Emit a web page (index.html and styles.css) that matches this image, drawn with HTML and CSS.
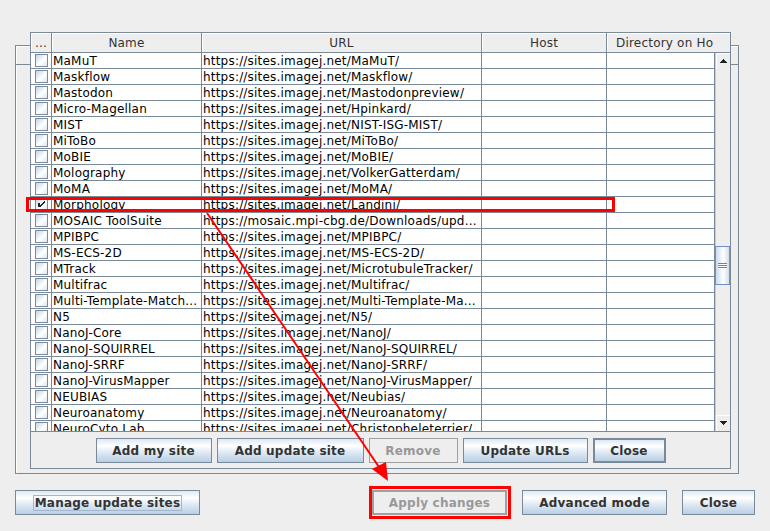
FILE: index.html
```html
<!DOCTYPE html>
<html>
<head>
<meta charset="utf-8">
<title>Manage update sites</title>
<link rel="stylesheet" href="styles.css">
</head>
<body>
<div class="screen">
  <div class="main">
    <div class="main-panel">
      <div class="main-header"></div>
    </div>
    <div class="main-buttons">
      <button class="btn btn-manage"><span class="focus">Manage update sites</span></button>
      <div class="spacer"></div>
      <button class="btn btn-apply" disabled>Apply changes</button>
      <button class="btn btn-adv">Advanced mode</button>
      <button class="btn btn-mclose">Close</button>
    </div>
  </div>

  <div class="dialog">
    <div class="thead">
      <div class="th">...</div>
      <div class="th">Name</div>
      <div class="th">URL</div>
      <div class="th">Host</div>
      <div class="th th-dir">Directory on Ho</div>
      <div class="th th-corner"></div>
    </div>
    <div class="tbody">
      <div class="rows">
        <div class="row"><div class="td"><span class="cb"></span></div><div class="td">MaMuT</div><div class="td">https://sites.imagej.net/MaMuT/</div><div class="td"></div><div class="td"></div></div>
        <div class="row"><div class="td"><span class="cb"></span></div><div class="td">Maskflow</div><div class="td">https://sites.imagej.net/Maskflow/</div><div class="td"></div><div class="td"></div></div>
        <div class="row"><div class="td"><span class="cb"></span></div><div class="td">Mastodon</div><div class="td">https://sites.imagej.net/Mastodonpreview/</div><div class="td"></div><div class="td"></div></div>
        <div class="row"><div class="td"><span class="cb"></span></div><div class="td">Micro-Magellan</div><div class="td">https://sites.imagej.net/Hpinkard/</div><div class="td"></div><div class="td"></div></div>
        <div class="row"><div class="td"><span class="cb"></span></div><div class="td">MIST</div><div class="td">https://sites.imagej.net/NIST-ISG-MIST/</div><div class="td"></div><div class="td"></div></div>
        <div class="row"><div class="td"><span class="cb"></span></div><div class="td">MiToBo</div><div class="td">https://sites.imagej.net/MiToBo/</div><div class="td"></div><div class="td"></div></div>
        <div class="row"><div class="td"><span class="cb"></span></div><div class="td">MoBIE</div><div class="td">https://sites.imagej.net/MoBIE/</div><div class="td"></div><div class="td"></div></div>
        <div class="row"><div class="td"><span class="cb"></span></div><div class="td">Molography</div><div class="td">https://sites.imagej.net/VolkerGatterdam/</div><div class="td"></div><div class="td"></div></div>
        <div class="row"><div class="td"><span class="cb"></span></div><div class="td">MoMA</div><div class="td">https://sites.imagej.net/MoMA/</div><div class="td"></div><div class="td"></div></div>
        <div class="row"><div class="td"><span class="cb"><svg class="check" width="13" height="13" viewBox="0 0 13 13" shape-rendering="crispEdges"><path d="M3 5h2v4h-2z M9 3h1v2h-1z M8 4h1v2h-1z M7 5h1v2h-1z M6 6h1v2h-1z M5 7h1v2h-1z" fill="#222"/></svg></span></div><div class="td">Morphology</div><div class="td">https://sites.imagej.net/Landini/</div><div class="td"></div><div class="td"></div></div>
        <div class="row"><div class="td"><span class="cb"></span></div><div class="td">MOSAIC ToolSuite</div><div class="td">https://mosaic.mpi-cbg.de/Downloads/upd...</div><div class="td"></div><div class="td"></div></div>
        <div class="row"><div class="td"><span class="cb"></span></div><div class="td">MPIBPC</div><div class="td">https://sites.imagej.net/MPIBPC/</div><div class="td"></div><div class="td"></div></div>
        <div class="row"><div class="td"><span class="cb"></span></div><div class="td">MS-ECS-2D</div><div class="td">https://sites.imagej.net/MS-ECS-2D/</div><div class="td"></div><div class="td"></div></div>
        <div class="row"><div class="td"><span class="cb"></span></div><div class="td">MTrack</div><div class="td">https://sites.imagej.net/MicrotubuleTracker/</div><div class="td"></div><div class="td"></div></div>
        <div class="row"><div class="td"><span class="cb"></span></div><div class="td">Multifrac</div><div class="td">https://sites.imagej.net/Multifrac/</div><div class="td"></div><div class="td"></div></div>
        <div class="row"><div class="td"><span class="cb"></span></div><div class="td">Multi-Template-Match...</div><div class="td">https://sites.imagej.net/Multi-Template-Ma...</div><div class="td"></div><div class="td"></div></div>
        <div class="row"><div class="td"><span class="cb"></span></div><div class="td">N5</div><div class="td">https://sites.imagej.net/N5/</div><div class="td"></div><div class="td"></div></div>
        <div class="row"><div class="td"><span class="cb"></span></div><div class="td">NanoJ-Core</div><div class="td">https://sites.imagej.net/NanoJ/</div><div class="td"></div><div class="td"></div></div>
        <div class="row"><div class="td"><span class="cb"></span></div><div class="td">NanoJ-SQUIRREL</div><div class="td">https://sites.imagej.net/NanoJ-SQUIRREL/</div><div class="td"></div><div class="td"></div></div>
        <div class="row"><div class="td"><span class="cb"></span></div><div class="td">NanoJ-SRRF</div><div class="td">https://sites.imagej.net/NanoJ-SRRF/</div><div class="td"></div><div class="td"></div></div>
        <div class="row"><div class="td"><span class="cb"></span></div><div class="td">NanoJ-VirusMapper</div><div class="td">https://sites.imagej.net/NanoJ-VirusMapper/</div><div class="td"></div><div class="td"></div></div>
        <div class="row"><div class="td"><span class="cb"></span></div><div class="td">NEUBIAS</div><div class="td">https://sites.imagej.net/Neubias/</div><div class="td"></div><div class="td"></div></div>
        <div class="row"><div class="td"><span class="cb"></span></div><div class="td">Neuroanatomy</div><div class="td">https://sites.imagej.net/Neuroanatomy/</div><div class="td"></div><div class="td"></div></div>
        <div class="row"><div class="td"><span class="cb"></span></div><div class="td">NeuroCyto Lab</div><div class="td">https://sites.imagej.net/Christopheleterrier/</div><div class="td"></div><div class="td"></div></div>
      </div>
      <div class="vscroll">
        <div class="sbtn"><svg width="7" height="4" viewBox="0 0 7 4" shape-rendering="crispEdges"><path d="M3 0h1v1h1v1h1v1h1v1H0V3h1V2h1V1h1z" fill="#222"/></svg></div>
        <div class="track"><div class="thumb"><span class="grip"></span><span class="grip"></span><span class="grip"></span></div></div>
        <div class="sbtn"><svg width="7" height="4" viewBox="0 0 7 4" shape-rendering="crispEdges"><path d="M0 0h7v1H6v1H5v1H4v1H3V3H2V2H1V1H0z" fill="#222"/></svg></div>
      </div>
    </div>
    <div class="dlg-buttons">
      <button class="btn btn-addmy">Add my site</button>
      <button class="btn btn-addupd">Add update site</button>
      <button class="btn btn-remove" disabled>Remove</button>
      <button class="btn btn-urls">Update URLs</button>
      <button class="btn btn-dclose">Close</button>
    </div>
  </div>

  <div class="mark mark-row"></div>
  <div class="mark mark-apply"></div>
  <svg class="arrow" width="770" height="531" viewBox="0 0 770 531">
    <line x1="207" y1="213" x2="381" y2="470" stroke="#ff0000" stroke-width="2"/>
    <polygon points="388,481 372,469 386,462" fill="#ff0000"/>
  </svg>
</div>
</body>
</html>
```
FILE: styles.css
```css
* { box-sizing: border-box; }
html, body { margin: 0; padding: 0; }
body {
  background: #eeeeee;
  font-family: "DejaVu Sans", "Liberation Sans", sans-serif;
  font-size: 12px;
  color: #000;
  width: 770px;
  height: 531px;
  overflow: hidden;
}
.screen { position: relative; width: 770px; height: 531px; }

/* underlying updater window */
.main { padding: 45px 15px 0 15px; display: flex; flex-direction: column; }
.main-panel {
  width: 724px;
  height: 429px;
  border: 1px solid #7a8a99;
  box-shadow: inset 1px 1px 0 #ffffff;
  background: #eeeeee;
}
.main-header { height: 19px; border-bottom: 1px solid #7a8a99; }
.main-buttons { display: flex; gap: 15px; margin-top: 16px; }
.spacer { flex: 1; }

/* buttons (Ocean look) */
.btn {
  font: bold 12px "DejaVu Sans", "Liberation Sans", sans-serif;
  letter-spacing: 0.2px;
  color: #333333;
  height: 25px;
  padding: 0;
  margin: 0;
  border: 1px solid #7a8a99;
  background: linear-gradient(to bottom, #dde8f3 0%, #ffffff 30%, #dde8f3 60%, #b8cfe5 100%);
  display: flex;
  align-items: center;
  justify-content: center;
  white-space: nowrap;
}
.btn:disabled {
  background: #eeeeee;
  color: #999999;
  border-color: #a0a0a0;
}
.focus { border: 1px solid #a3b8cc; line-height: 14px; padding: 0 1px; }
.btn-manage { width: 185px; }
.btn-apply { width: 135px; border-width: 2px; }
.btn-adv { width: 145px; }
.btn-mclose { width: 73px; }
.btn-addmy { width: 116px; }
.btn-addupd { width: 147px; }
.btn-remove { width: 89px; }
.btn-urls { width: 125px; }
.btn-dclose { width: 73px; border-width: 2px; }

/* dialog */
.dialog {
  position: absolute;
  left: 30px;
  top: 32px;
  width: 701px;
  height: 437px;
  border: 1px solid #7a8a99;
  background: #eeeeee;
  display: flex;
  flex-direction: column;
}
.thead {
  display: grid;
  grid-template-columns: 21px 150px 280px 125px 108px 15px;
  height: 20px;
  border-bottom: 1px solid #7a8a99;
}
.th {
  border-right: 1px solid #7a8a99;
  box-shadow: inset 1px 1px 0 #ffffff;
  text-align: center;
  line-height: 17px;
  padding-top: 2px;
  color: #333333;
  letter-spacing: 0.2px;
  white-space: nowrap;
  overflow: hidden;
}
.th-dir { text-align: left; padding-left: 9px; border-right: none; }
.th-corner { border-right: none; box-shadow: inset 0 1px 0 #ffffff; }

.tbody { display: flex; height: 379px; border-bottom: 1px solid #7a8a99; }
.rows { width: 684px; height: 378px; overflow: hidden; background: #ffffff; }
.row {
  display: grid;
  grid-template-columns: 21px 150px 280px 125px 108px;
  height: 16px;
}
.td {
  border-right: 1px solid #7a8a99;
  border-bottom: 1px solid #7a8a99;
  line-height: 14px;
  padding: 1px 0 0 1px;
  letter-spacing: 0.2px;
  white-space: nowrap;
  overflow: hidden;
}
.cb {
  display: block;
  width: 13px;
  height: 13px;
  margin: 0 0 0 3px;
  border: 1px solid #7a8a99;
  background: linear-gradient(135deg, #c4d5e8 0%, #ffffff 55%, #dde8f3 100%);
  position: relative;
}
.check { position: absolute; left: -1px; top: -1px; }

.vscroll {
  width: 15px;
  display: flex;
  flex-direction: column;
  background: #eeeeee;
}
.sbtn {
  height: 16px;
  display: flex;
  align-items: center;
  justify-content: center;
  background: #eeeeee;
  border-left: 1px solid #b8cfe5;
  box-shadow: inset 1px 1px 0 #ffffff;
}
.track { flex: 1; border-left: 1px solid #b8cfe5; }
.thumb {
  margin-top: 177px;
  height: 39px;
  margin-left: -1px;
  border: 1px solid #6f8fcf;
  background: linear-gradient(to right, #c9daf0 0%, #ffffff 55%, #d3deea 100%);
  display: flex;
  flex-direction: column;
  align-items: center;
  justify-content: center;
  gap: 1px;
}
.grip { display: block; width: 9px; height: 1px; background: #6382bf; box-shadow: 0 1px 0 #ffffff; }

.dlg-buttons {
  flex: 1;
  display: flex;
  justify-content: center;
  align-items: flex-start;
  gap: 5px;
  padding-top: 6px;
}

/* annotations */
.mark { position: absolute; border: 3px solid #ff0000; }
.mark-row { left: 26px; top: 197px; width: 589px; height: 15px; }
.mark-apply { left: 369px; top: 486px; width: 142px; height: 33px; }
.arrow { position: absolute; left: 0; top: 0; pointer-events: none; }
```
